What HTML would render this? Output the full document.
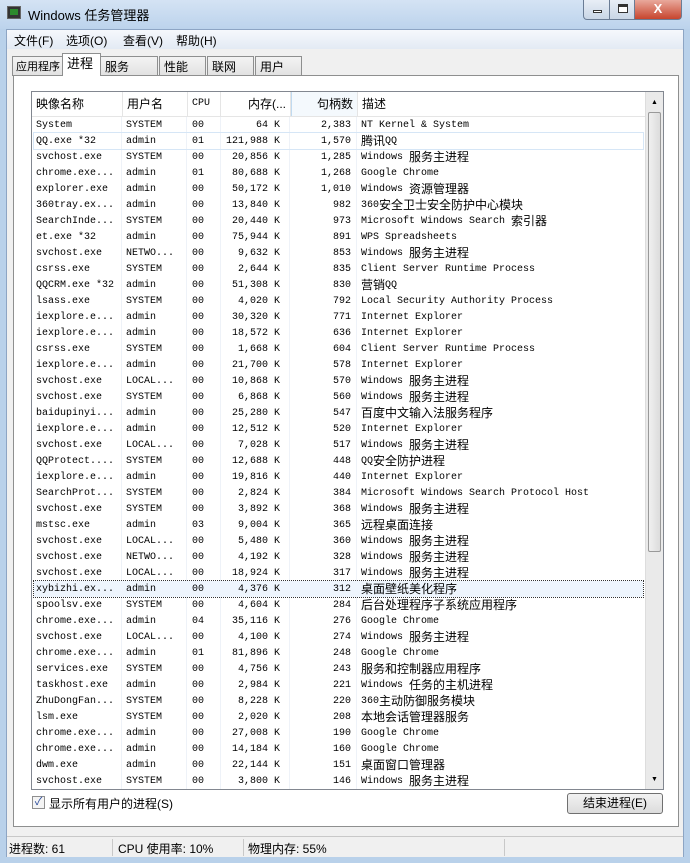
<!DOCTYPE html>
<html><head><meta charset="utf-8"><style>
*{margin:0;padding:0;box-sizing:border-box}
body{width:690px;height:863px;overflow:hidden;background:#b9d1ea;font-family:"Liberation Sans","Noto Sans CJK SC",sans-serif;position:relative}
.title{position:absolute;left:0;top:0;width:690px;height:29px;background:linear-gradient(#d4e3f4,#bcd3ec)}
.title .t{position:absolute;left:28px;top:5px;font-size:13px;color:#000}
.ico{position:absolute;left:7px;top:6px;width:14px;height:13px;background:#333;border:1px solid #666}
.ico:after{content:"";position:absolute;left:2px;top:2px;width:8px;height:6px;background:#2c8a2c}
.btn{position:absolute;top:0;height:20px;border:1px solid #6a7c95;border-top:none;background:linear-gradient(#e8eef6,#c9d6e6)}
.win{position:absolute;left:6px;top:29px;width:678px;height:828px;background:#f0f0f0;border:1px solid #8da5c4}
.menu{position:absolute;left:0;top:0;width:676px;height:19px;background:linear-gradient(#f6f8fc,#e3eaf4);font-size:12px}
.menu span{position:absolute;top:2px}
.tab{position:absolute;top:26px;height:20px;border:1px solid #8e8f8f;border-bottom:none;background:linear-gradient(#f3f3f3,#e1e1e1);font-size:12px;padding:2px 2px;white-space:nowrap;overflow:hidden;line-height:16px}
.panel{position:absolute;left:6px;top:45px;width:666px;height:752px;background:#fff;border:1px solid #8e8f8f}
.list{position:absolute;left:17px;top:15px;width:633px;height:699px;border:1px solid #828790;background:#fff;overflow:hidden}
.hdr{position:absolute;left:0;top:0;width:613px;height:25px;border-bottom:1px solid #e5e5e5;font-size:12px}
.hdr div{position:absolute;top:0;height:24px;line-height:24px;border-right:1px solid #e5e5e5;padding:0 4px;white-space:nowrap}
.row{position:absolute;left:2px;width:609px;height:16px;font-family:"Liberation Mono","Noto Sans CJK SC",monospace;font-size:10px;white-space:pre}
.row span{position:absolute;top:0;height:16px;display:flex;align-items:center;white-space:pre}
.row b{font-weight:normal;font-size:12px;line-height:1;font-family:"Noto Sans CJK SC",sans-serif}
.sb{position:absolute;right:0;top:0;width:18px;height:697px;background:#eaeaea;border-left:1px solid #ddd}
.status{position:absolute;left:0;top:806px;width:676px;height:21px;background:#f0f0f0;border-top:1px solid #c8c8c8;font-size:12px}
.status span{position:absolute;top:3px}
.status i{position:absolute;top:2px;width:1px;height:17px;background:#c8c8c8}
</style></head><body>
<div class="title"><div class="ico"></div><div class="t">Windows 任务管理器</div>
<div class="btn" style="left:583px;width:27px;border-radius:0 0 0 4px"><div style="position:absolute;left:9px;top:10px;width:9px;height:3px;background:#fff;border:1px solid #333"></div></div>
<div class="btn" style="left:609px;width:26px"><div style="position:absolute;left:8px;top:4px;width:10px;height:9px;border:1px solid #333;border-top-width:3px;background:#fff"></div></div>
<div class="btn" style="left:634px;width:48px;background:linear-gradient(#e9a99c,#c7452e);border-radius:0 0 4px 0;color:#fff;font-weight:bold;text-align:center;font-size:13px;line-height:18px">X</div>
</div>
<div class="win">
<div class="menu"><span style="left:7px">文件(F)</span><span style="left:59px">选项(O)</span><span style="left:116px">查看(V)</span><span style="left:169px">帮助(H)</span></div>
<div class="tab" style="left:5px;width:51px;font-size:11px;padding-left:3px">应用程序</div>
<div class="tab" style="left:55px;width:39px;top:23px;height:23px;background:#fff;z-index:2;font-size:13px;padding-left:4px">进程</div>
<div class="tab" style="left:93px;width:58px;padding-left:4px">服务</div>
<div class="tab" style="left:152px;width:47px;padding-left:4px">性能</div>
<div class="tab" style="left:200px;width:47px;padding-left:4px">联网</div>
<div class="tab" style="left:248px;width:47px;padding-left:4px">用户</div>
<div class="panel">
<div class="list">
<div class="hdr">
<div style="left:0;width:91px">映像名称</div>
<div style="left:91px;width:65px">用户名</div>
<div style="left:156px;width:33px;font-family:'Liberation Mono';font-size:10px">CPU</div>
<div style="left:189px;width:70px;text-align:right">内存(...</div>
<div style="left:259px;width:67px;text-align:right;background:#f4f9fd;border-left:1px solid #c0daf0">句柄数</div>
<div style="left:326px;width:287px;border:none">描述</div>
</div>
<div style="position:absolute;left:188px;top:25px;width:1px;height:680px;background:#eef2f8"></div>
<div style="position:absolute;left:257px;top:25px;width:1px;height:680px;background:#eef2f8"></div>
<div style="position:absolute;left:89px;top:25px;width:1px;height:680px;background:#eef2f8"></div>
<div style="position:absolute;left:154px;top:25px;width:1px;height:680px;background:#eef2f8"></div>
<div style="position:absolute;left:324px;top:25px;width:1px;height:680px;background:#eef2f8"></div>
<div id="rows"></div>
<div class="sb"><div style="position:absolute;left:2px;top:20px;width:13px;height:440px;background:linear-gradient(90deg,#f0f0f0,#dcdcdc);border:1px solid #999;border-radius:2px"></div><div style="position:absolute;left:5px;top:7px;font-size:7px">▲</div><div style="position:absolute;left:5px;bottom:6px;font-size:7px">▼</div></div>
</div>
<div style="position:absolute;left:18px;top:720px;width:13px;height:13px;border:1px solid #8f8f8f;background:#f4f4f4;font-size:11px;line-height:11px;color:#2a4a9a;text-align:center">✓</div>
<div style="position:absolute;left:35px;top:719px;font-size:12px">显示所有用户的进程(S)</div>
<div style="position:absolute;left:553px;top:717px;width:96px;height:21px;border:1px solid #707070;border-radius:3px;background:linear-gradient(#f2f2f2,#dcdcdc);font-size:12px;text-align:center;line-height:19px">结束进程(E)</div>
</div>
<div class="status"><span style="left:2px">进程数: 61</span><i style="left:105px"></i><span style="left:111px">CPU 使用率: 10%</span><i style="left:236px"></i><span style="left:241px">物理内存: 55%</span><i style="left:497px"></i></div>
</div>
<script>
var d=`System|SYSTEM|00|64 K|2,383|NT Kernel & System
QQ.exe *32|admin|01|121,988 K|1,570|腾讯QQ
svchost.exe|SYSTEM|00|20,856 K|1,285|Windows 服务主进程
chrome.exe...|admin|01|80,688 K|1,268|Google Chrome
explorer.exe|admin|00|50,172 K|1,010|Windows 资源管理器
360tray.ex...|admin|00|13,840 K|982|360安全卫士 安全防护中心模块
SearchInde...|SYSTEM|00|20,440 K|973|Microsoft Windows Search 索引器
et.exe *32|admin|00|75,944 K|891|WPS Spreadsheets
svchost.exe|NETWO...|00|9,632 K|853|Windows 服务主进程
csrss.exe|SYSTEM|00|2,644 K|835|Client Server Runtime Process
QQCRM.exe *32|admin|00|51,308 K|830|营销QQ
lsass.exe|SYSTEM|00|4,020 K|792|Local Security Authority Process
iexplore.e...|admin|00|30,320 K|771|Internet Explorer
iexplore.e...|admin|00|18,572 K|636|Internet Explorer
csrss.exe|SYSTEM|00|1,668 K|604|Client Server Runtime Process
iexplore.e...|admin|00|21,700 K|578|Internet Explorer
svchost.exe|LOCAL...|00|10,868 K|570|Windows 服务主进程
svchost.exe|SYSTEM|00|6,868 K|560|Windows 服务主进程
baidupinyi...|admin|00|25,280 K|547|百度中文输入法服务程序
iexplore.e...|admin|00|12,512 K|520|Internet Explorer
svchost.exe|LOCAL...|00|7,028 K|517|Windows 服务主进程
QQProtect....|SYSTEM|00|12,688 K|448|QQ安全防护进程
iexplore.e...|admin|00|19,816 K|440|Internet Explorer
SearchProt...|SYSTEM|00|2,824 K|384|Microsoft Windows Search Protocol Host
svchost.exe|SYSTEM|00|3,892 K|368|Windows 服务主进程
mstsc.exe|admin|03|9,004 K|365|远程桌面连接
svchost.exe|LOCAL...|00|5,480 K|360|Windows 服务主进程
svchost.exe|NETWO...|00|4,192 K|328|Windows 服务主进程
svchost.exe|LOCAL...|00|18,924 K|317|Windows 服务主进程
xybizhi.ex...|admin|00|4,376 K|312|桌面壁纸美化程序
spoolsv.exe|SYSTEM|00|4,604 K|284|后台处理程序子系统应用程序
chrome.exe...|admin|04|35,116 K|276|Google Chrome
svchost.exe|LOCAL...|00|4,100 K|274|Windows 服务主进程
chrome.exe...|admin|01|81,896 K|248|Google Chrome
services.exe|SYSTEM|00|4,756 K|243|服务和控制器应用程序
taskhost.exe|admin|00|2,984 K|221|Windows 任务的主机进程
ZhuDongFan...|SYSTEM|00|8,228 K|220|360主动防御服务模块
lsm.exe|SYSTEM|00|2,020 K|208|本地会话管理器服务
chrome.exe...|admin|00|27,008 K|190|Google Chrome
chrome.exe...|admin|00|14,184 K|160|Google Chrome
dwm.exe|admin|00|22,144 K|151|桌面窗口管理器
svchost.exe|SYSTEM|00|3,800 K|146|Windows 服务主进程`.split("\n");
var h="";d.forEach(function(l,i){var c=l.split("|");var st="top:"+(25+i*16)+"px;";
if(i==1)st+="outline:1px solid #d6e6f6;";
if(i==29)st+="background:#eef5fd;outline:1px dotted #333;";
h+='<div class="row" style="'+st+'"><span style="left:2px">'+c[0]+'</span><span style="left:92px">'+c[1]+'</span><span style="left:158px">'+c[2]+'</span><span style="right:363px">'+c[3]+'</span><span style="right:292px">'+c[4]+'</span><span style="left:327px">'+c[5].replace(/[\u4e00-\u9fff]+/g,function(m){return '<b>'+m+'</b>'})+'</span></div>';});
document.getElementById("rows").innerHTML=h;
</script>
</body></html>
